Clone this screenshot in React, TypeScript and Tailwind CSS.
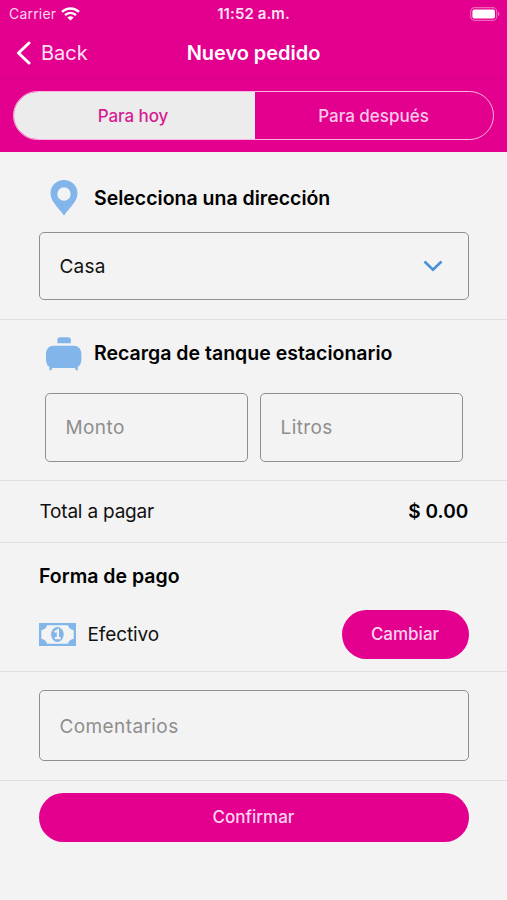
import type { ReactNode } from "react";

function WifiIcon() {
    return (
        <svg width="19" height="14" viewBox="0 0 19 14" fill="none" stroke="white">
            <path d="M1 4.9C5.8 0.2 13.2 0.2 18 4.9" strokeWidth="2.5" />
            <path d="M4 8.1C7.2 5.1 11.8 5.1 15 8.1" strokeWidth="2.4" />
            <path d="M9.5 13.6L6.3 10.4C8.1 8.8 10.9 8.8 12.7 10.4Z" fill="white" stroke="none" />
        </svg>
    );
}

function BatteryIcon() {
    return (
        <svg width="31" height="14" viewBox="0 0 31 14" fill="none">
            <rect x="0.7" y="0.7" width="26" height="12.6" rx="3.8" stroke="#f064bb" strokeWidth="1.2" />
            <rect x="2.4" y="2.4" width="22.6" height="9.2" rx="2" fill="white" />
            <path d="M28.2 4.8C29.7 5.3 29.7 8.7 28.2 9.2Z" fill="#f28acb" />
        </svg>
    );
}

function PinIcon() {
    return (
        <svg width="28" height="36" viewBox="0 0 28 36" fill="#82b5ea">
            <path
                fillRule="evenodd"
                d="M14 0C6.4 0 0.5 5.9 0.5 13.3C0.5 21.5 7.6 26.5 14 35.6C20.4 26.5 27.5 21.5 27.5 13.3C27.5 5.9 21.6 0 14 0ZM14 7.3A6.7 6.7 0 1 1 14 20.7A6.7 6.7 0 1 1 14 7.3Z"
            />
        </svg>
    );
}

function TankIcon() {
    return (
        <svg width="36" height="34" viewBox="0.4 0 36 34" fill="#82b5ea">
            <path d="M11.8 6.2V3Q11.8 0.2 14.8 0.2H22.5Q25.3 0.2 25.3 3V6.2Z" />
            <path d="M8 8.8H28C32.6 8.8 35.8 12.2 35.8 17.5V22C35.8 26.5 33.8 29.3 32.2 29.8V33.2H30.2L29.4 31H6.6L5.8 33.2H3.8V29.8C2.2 29.3 0.4 26.5 0.4 22V17.5C0.4 12.2 3.4 8.8 8 8.8Z" />
        </svg>
    );
}

function BillIcon() {
    return (
        <svg width="37" height="23" viewBox="0 0 37 23" fill="none">
            <rect width="37" height="23" fill="#82b5ea" />
            <path d="M8 2.3H29Q29.8 6.4 34.7 7.3V15.7Q29.8 16.6 29 20.7H8Q7.2 16.6 2.3 15.7V7.3Q7.2 6.4 8 2.3Z" fill="#f3f3f3" />
            <ellipse cx="18.4" cy="11.5" rx="6.3" ry="7.4" fill="#82b5ea" />
            <path d="M15.6 8.9L18.9 7.2V15.2M15.8 15.2H21.6" stroke="#f3f3f3" strokeWidth="2.2" />
        </svg>
    );
}

function Field({ label, className }: { label: string; className: string }) {
    return (
        <div className={`flex items-center rounded-[5px] border border-[#8f8f8f] pl-5 ${className}`}>
            <span className="text-[19px] tracking-[0.4px] text-[#8e8e8e]">{label}</span>
        </div>
    );
}

function SectionTitle({ icon, children }: { icon: ReactNode; children: ReactNode }) {
    return (
        <div className="flex h-9 items-center">
            <div className="flex w-[50px] justify-center">{icon}</div>
            <h2 className="ml-[5.5px] pt-px text-[19.5px] font-semibold text-black">{children}</h2>
        </div>
    );
}

export default function App() {
    return (
        <div className="flex h-[900px] w-[507px] flex-col overflow-hidden bg-[#f3f3f3] font-['Inter',sans-serif] text-[#111]">
            <header className="h-[152px] bg-[#e3008f] text-white">
                {/* Status bar */}
                <div className="grid h-[27px] grid-cols-3 items-center pr-[6px] pl-[9px] text-[14px]">
                    <div className="flex items-center gap-[5px]">
                        <span className="tracking-[0.2px] text-[#fcd5ee]">Carrier</span>
                        <WifiIcon />
                    </div>
                    <span className="pt-0.5 pr-[3px] text-center text-[15px] font-semibold tracking-[0.1px] text-[#fde3f3]">11:52 a.m.</span>
                    <div className="flex justify-end">
                        <BatteryIcon />
                    </div>
                </div>

                {/* Navigation */}
                <div className="grid h-[52px] grid-cols-3 items-center border-b border-[#d8008a] px-4">
                    <button className="flex items-center gap-2.5 text-[20px] text-[#fde3f3]">
                        <svg width="15" height="24" viewBox="0 0 15 24" fill="none" stroke="white" strokeWidth="3" strokeLinecap="round" strokeLinejoin="round">
                            <path d="M13 2L2.5 12L13 22" />
                        </svg>
                        Back
                    </button>
                    <h1 className="text-center text-[20px] font-semibold tracking-[-0.05px] whitespace-nowrap">Nuevo pedido</h1>
                </div>

                {/* Delivery time */}
                <div className="mx-[13px] mt-3 flex h-[49px] overflow-hidden rounded-full border border-[#f9b5df] text-[17px] font-medium">
                    <button className="h-full w-[241px] bg-[#ececec] pt-0.5 pr-[3px] tracking-[-0.1px] text-[#d61c93]">Para hoy</button>
                    <button className="h-full flex-1 pt-0.5 pr-px text-[#fcc8e8]">Para después</button>
                </div>
            </header>

            <section className="h-[167.5px] border-b border-[#e0e0e0] px-[38.5px] pt-7">
                <SectionTitle icon={<PinIcon />}>Selecciona una dirección</SectionTitle>
                <button className="mt-4 flex h-[68px] w-full items-center justify-between rounded-[5px] border border-[#8f8f8f] pr-[25px] pl-5 text-[19px]">
                    <span className="pt-0.5 tracking-[0.2px]">Casa</span>
                    <svg width="20" height="12" viewBox="0 0 20 12" fill="none" stroke="#4a90d9" strokeWidth="2.6">
                        <path d="M1.5 1.5L10 9.8L18.5 1.5" />
                    </svg>
                </button>
            </section>

            <section className="h-[161px] border-b border-[#e0e0e0] px-[38.5px] pt-4">
                <SectionTitle icon={<TankIcon />}>Recarga de tanque estacionario</SectionTitle>
                <div className="mx-1.5 mt-[21px] flex gap-3">
                    <Field label="Monto" className="h-[69px] flex-1 pt-0.5" />
                    <Field label="Litros" className="h-[69px] flex-1 pt-0.5" />
                </div>
            </section>

            <section className="flex h-[62px] items-center justify-between border-b border-[#e0e0e0] px-[38.5px] pt-[3px] text-[19px]">
                <span className="pl-px tracking-[-0.2px]">Total a pagar</span>
                <span className="font-semibold tracking-[0.1px] text-black">$ 0.00</span>
            </section>

            <section className="h-[129px] border-b border-[#e0e0e0] px-[38.5px] pt-[19px]">
                <h2 className="pl-[0.5px] text-[19.5px] leading-7 font-semibold text-black">Forma de pago</h2>
                <div className="mt-[20.5px] flex h-[49px] items-center">
                    <BillIcon />
                    <span className="ml-3 pt-px text-[19px] tracking-[-0.1px]">Efectivo</span>
                    <button className="ml-auto h-[49px] w-[127px] rounded-full bg-[#e3008f] text-[17px] font-medium text-[#fcd5ee]">
                        Cambiar
                    </button>
                </div>
            </section>

            <section className="h-[109px] border-b border-[#e0e0e0] px-[38.5px] pt-[18.5px]">
                <Field label="Comentarios" className="h-[71px] pt-1" />
            </section>

            <footer className="px-[38.5px] pt-[12.5px]">
                <button className="h-[49px] w-full rounded-full bg-[#e3008f] text-[17px] font-medium text-[#fcd5ee]">
                    Confirmar
                </button>
            </footer>
        </div>
    );
}
